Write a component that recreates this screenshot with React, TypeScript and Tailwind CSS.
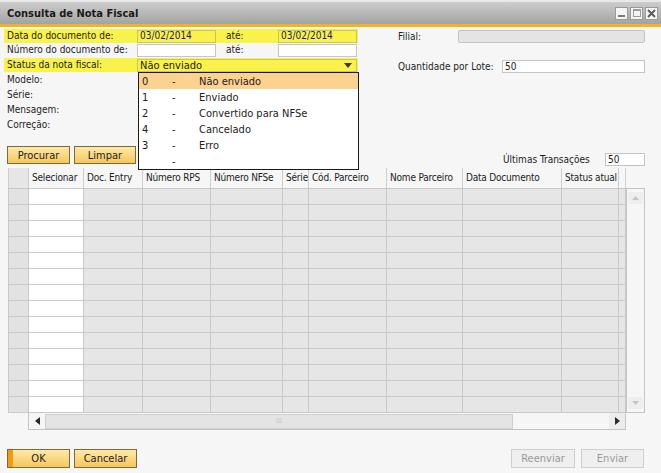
import React from "react";

const FONT = "font-['DejaVu_Sans_Condensed','DejaVu_Sans',sans-serif]";

const cols = [
  { label: "", w: "w-[21px]", cell: "bg-[#e2e2e2]" },
  { label: "Selecionar", w: "w-[55px]", cell: "bg-white" },
  { label: "Doc. Entry", w: "w-[59px]", cell: "bg-[#e6e6e6]" },
  { label: "Número RPS", w: "w-[68px]", cell: "bg-[#e6e6e6]" },
  { label: "Número NFSe", w: "w-[72px]", cell: "bg-[#e6e6e6]" },
  { label: "Série", w: "w-[26px]", cell: "bg-[#e6e6e6]" },
  { label: "Cód. Parceiro", w: "w-[78px]", cell: "bg-[#e6e6e6]" },
  { label: "Nome Parceiro", w: "w-[76px]", cell: "bg-[#e6e6e6]" },
  { label: "Data Documento", w: "w-[99px]", cell: "bg-[#e6e6e6]" },
  { label: "Status atual", w: "w-[57px]", cell: "bg-[#e6e6e6]" },
];

const options = [
  { n: "0", t: "Não enviado", sel: true },
  { n: "1", t: "Enviado" },
  { n: "2", t: "Convertido para NFSe" },
  { n: "4", t: "Cancelado" },
  { n: "3", t: "Erro" },
  { n: "", t: "" },
];

function OrangeButton({ children, className = "", strip = false }: { children: React.ReactNode; className?: string; strip?: boolean }) {
  return (
    <div
      className={`relative flex items-center justify-center border border-[#7d6a3c] bg-gradient-to-b from-[#fde9a8] to-[#f6c658] text-[#1e1e1e] ${className}`}
    >
      {strip && <div className="absolute left-0 top-0 bottom-0 w-[5px] bg-[#f39a12]" />}
      {children}
    </div>
  );
}

function GrayButton({ children, className = "" }: { children: React.ReactNode; className?: string }) {
  return (
    <div className={`flex items-center justify-center border border-[#cfcfcf] bg-[#efefef] text-[#9a9a9a] ${className}`}>
      {children}
    </div>
  );
}

export default function App() {
  return (
    <div className={`w-[661px] h-[473px] bg-[#f6f6f6] flex flex-col text-[10px] text-[#1c1c1c] leading-none overflow-hidden ${FONT}`}>
      {/* title bar */}
      <div className="h-[24px] flex items-center justify-between border-t-2 border-[#e8e8e8] bg-gradient-to-b from-[#cdcdcd] to-[#a3a3a3] pl-[7px] pr-[3px]">
        <span className="text-[11px] font-bold text-[#1a1a1a]">Consulta de Nota Fiscal</span>
        <div className="flex gap-[2px]">
          <div className="w-[13px] h-[13px] bg-[#f4f4f4] border border-[#9a9a9a] flex items-end justify-center pb-[2px]">
            <div className="w-[7px] h-[2px] bg-[#7a7a7a]" />
          </div>
          <div className="w-[13px] h-[13px] bg-[#f4f4f4] border border-[#9a9a9a] flex items-center justify-center">
            <div className="w-[8px] h-[8px] border border-[#9a9a9a] border-t-2" />
          </div>
          <div className="w-[13px] h-[13px] bg-[#f4f4f4] border border-[#9a9a9a] flex items-center justify-center">
            <svg width="9" height="9" viewBox="0 0 9 9">
              <path d="M1 1 L8 8 M8 1 L1 8" stroke="#5a5a5a" strokeWidth="1.8" />
            </svg>
          </div>
        </div>
      </div>
      <div className="h-[3px] bg-[#f0b41c]" />

      <div className="relative flex-1 flex flex-col">
        {/* top form */}
        <div className="flex h-[141px]">
          <div className="w-[398px] pt-[2px] pl-[4px] flex flex-col">
            <div className="w-[354px] h-[14px] bg-[#f8f24a] flex items-center">
              <span className="w-[133px] pl-[3px]">Data do documento de:</span>
              <div className="w-[79px] h-[13px] border border-[#cfc35a] bg-[#f8f24a] pl-[2px] flex items-center text-[#1a1a55]">03/02/2014</div>
              <span className="w-[62px] pl-[10px]">até:</span>
              <div className="w-[79px] h-[13px] border border-[#cfc35a] bg-[#f8f24a] pl-[2px] flex items-center text-[#1a1a55]">03/02/2014</div>
            </div>
            <div className="w-[354px] h-[14px] flex items-center">
              <span className="w-[133px] pl-[3px]">Número do documento de:</span>
              <div className="w-[79px] h-[13px] border border-[#c6c6c6] bg-white" />
              <span className="w-[62px] pl-[10px]">até:</span>
              <div className="w-[79px] h-[13px] border border-[#c6c6c6] bg-white" />
            </div>
            <div className="mt-[1px] w-[354px] h-[14px] bg-[#f8f24a] flex items-center">
              <span className="w-[133px] pl-[3px]">Status da nota fiscal:</span>
              <div className="w-[220px] h-[13px] border border-[#cfc35a] bg-[#f8f24a] pl-[2px] pr-[4px] flex items-center justify-between">
                <span className="text-[11px]">Não enviado</span>
                <svg width="8" height="5" viewBox="0 0 8 5">
                  <path d="M0 0 L8 0 L4 5 Z" fill="#3a3a3a" />
                </svg>
              </div>
            </div>
            <div className="h-[15px] flex items-center pl-[3px]">Modelo:</div>
            <div className="h-[15px] flex items-center pl-[3px]">Série:</div>
            <div className="h-[15px] flex items-center pl-[3px]">Mensagem:</div>
            <div className="h-[15px] flex items-center pl-[3px]">Correção:</div>
            <div className="mt-[14px] ml-[3px] flex gap-[4px] text-[11px]">
              <OrangeButton className="w-[63px] h-[18px]">Procurar</OrangeButton>
              <OrangeButton className="w-[62px] h-[18px]">Limpar</OrangeButton>
            </div>
          </div>

          <div className="flex-1 flex flex-col pt-[3px]">
            <div className="flex items-center h-[13px]">
              <span className="w-[60px]">Filial:</span>
              <div className="w-[187px] h-[13px] rounded-[2px] border border-[#c4c4c4] bg-[#e4e4e4]" />
            </div>
            <div className="mt-[17px] flex items-center h-[13px]">
              <span className="w-[104px]">Quantidade por Lote:</span>
              <div className="w-[143px] h-[13px] border border-[#c4c4c4] bg-white pl-[2px] flex items-center">50</div>
            </div>
            <div className="mt-[80px] ml-[105px] flex items-center h-[13px]">
              <span className="w-[102px]">Últimas Transações</span>
              <div className="w-[40px] h-[13px] border border-[#c4c4c4] bg-white pl-[2px] flex items-center">50</div>
            </div>
          </div>
        </div>

        {/* grid */}
        <div className="ml-[8px] w-[637px] h-[262px] flex">
          <div className="w-[618px] flex flex-col">
            <div className="h-[21px] flex border-b border-[#c8c8c8]">
              {cols.map((c, i) => (
                <div
                  key={i}
                  className={`${c.w} h-full flex items-center pl-[3px] whitespace-nowrap overflow-hidden tracking-[-0.2px] border-r border-[#cdcdcd] ${i === 0 ? "bg-[#e6e6e6] border-l" : ""}`}
                >
                  {c.label}
                </div>
              ))}
              <div className="flex-1 border-r border-[#cdcdcd]" />
            </div>
            {Array.from({ length: 14 }).map((_, r) => (
              <div key={r} className="h-[16px] flex">
                {cols.map((c, i) => (
                  <div key={i} className={`${c.w} h-full border-r border-b border-[#c9c9c9] ${c.cell} ${i === 0 ? "border-l" : ""}`} />
                ))}
                <div className="flex-1 h-full border-r border-b border-[#c9c9c9] bg-[#e6e6e6]" />
              </div>
            ))}
            {/* horizontal scrollbar */}
            <div className="ml-[20px] h-[17px] flex items-center border border-t-0 border-[#c4c4c4] bg-[#f6f6f6]">
              <div className="w-[16px] h-full flex items-center justify-center">
                <svg width="5" height="8" viewBox="0 0 5 8"><path d="M5 0 L0 4 L5 8 Z" fill="#2a2a2a" /></svg>
              </div>
              <div className="w-[468px] h-[15px] bg-[#e4e4e4] border border-[#d0d0d0] flex items-center justify-center text-[#b0b0b0] text-[7px]">
                ⁞⁞⁞
              </div>
              <div className="flex-1" />
              <div className="w-[16px] h-full flex items-center justify-center bg-[#ececec]">
                <svg width="5" height="8" viewBox="0 0 5 8"><path d="M0 0 L5 4 L0 8 Z" fill="#2a2a2a" /></svg>
              </div>
            </div>
          </div>
          {/* vertical scrollbar */}
          <div className="w-[19px] flex flex-col">
            <div className="h-[20px]" />
            <div className="h-[225px] border border-[#c4c4c4] bg-[#f6f6f6] flex flex-col justify-between items-center py-[3px]">
              <div className="w-[15px] h-[12px] bg-[#eeeeee] flex items-center justify-center">
                <svg width="7" height="4" viewBox="0 0 7 4"><path d="M0 4 L7 4 L3.5 0 Z" fill="#c4c4c4" /></svg>
              </div>
              <div className="w-[15px] h-[12px] bg-[#eeeeee] flex items-center justify-center">
                <svg width="7" height="4" viewBox="0 0 7 4"><path d="M0 0 L7 0 L3.5 4 Z" fill="#c4c4c4" /></svg>
              </div>
            </div>
          </div>
        </div>

        {/* footer */}
        <div className="mt-[19px] pl-[7px] pr-[17px] flex items-center text-[11px]">
          <OrangeButton strip className="w-[63px] h-[19px]">OK</OrangeButton>
          <OrangeButton className="ml-[4px] w-[63px] h-[19px]">Cancelar</OrangeButton>
          <div className="flex-1" />
          <GrayButton className="w-[64px] h-[19px]">Reenviar</GrayButton>
          <GrayButton className="ml-[6px] w-[63px] h-[19px]">Enviar</GrayButton>
        </div>

        {/* open dropdown */}
        <div className="absolute left-[138px] top-[45px] w-[221px] border border-[#1a1a1a] bg-white text-[11px]">
          {options.map((o, i) => (
            <div key={i} className={`h-[16px] flex items-center ${o.sel ? "bg-[#fbd290]" : ""}`}>
              <span className="w-[33px] pl-[3px]">{o.n}</span>
              <span className="w-[27px]">-</span>
              <span>{o.t}</span>
            </div>
          ))}
        </div>
      </div>
    </div>
  );
}
